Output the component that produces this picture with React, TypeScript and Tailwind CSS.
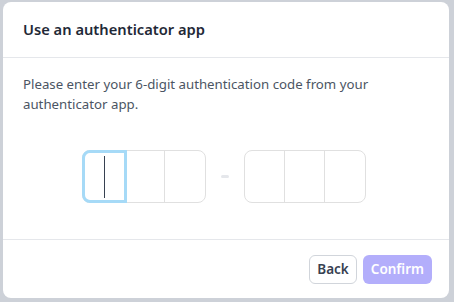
export default function App() {
  const font = { fontFamily: '"Noto Sans", "Open Sans", sans-serif' };
  return (
    <div className="h-[302px] w-[454px] overflow-hidden bg-[#cdd1d8] pl-[3px] pt-[2px]" style={font}>
      <div className="flex h-[296px] w-[446px] flex-col rounded-lg bg-white">
        {/* header */}
        <div className="flex h-[56px] items-center border-b border-[#e5e7eb] px-5">
          <h2 className="text-[14.7px] font-semibold text-[#1f2937]">Use an authenticator app</h2>
        </div>

        {/* body */}
        <div className="flex h-[182px] flex-col border-b border-[#e5e7eb] px-5 pt-[16px]">
          <p className="text-[13.25px] leading-[20px] text-[#4b5563]">
            Please enter your 6-digit authentication code from your authenticator app.
          </p>
          <div className="mt-[36px] flex items-center justify-center gap-[15px] pr-[4px]">
            <div className="flex h-[53px] w-[124px] rounded-lg border border-[#e0e0e0]">
              <div className="relative -m-px flex h-[53px] w-[45px] items-center justify-center rounded-l-lg border-[3px] border-[#a6daf7]">
                <div className="h-[42px] w-px bg-[#374151]" />
              </div>
              <div className="w-[39px] border-r border-[#e0e0e0]" />
              <div className="flex-1" />
            </div>
            <div className="h-[3px] w-[8px] rounded-full bg-[#e5e7eb]" />
            <div className="flex h-[53px] w-[122px] rounded-lg border border-[#e0e0e0]">
              <div className="w-[40px] border-r border-[#e0e0e0]" />
              <div className="w-[40px] border-r border-[#e0e0e0]" />
              <div className="flex-1" />
            </div>
          </div>
        </div>

        {/* footer */}
        <div className="flex flex-1 items-center justify-end gap-[6px] pr-[17px]">
          <button className="h-[29px] rounded-md border border-[#d1d5db] px-[7px] text-[13.5px] font-semibold text-[#374151]">
            Back
          </button>
          <button className="h-[29px] rounded-md bg-[#b3aefb] px-[8px] text-[13.5px] font-semibold text-white">
            Confirm
          </button>
        </div>
      </div>
    </div>
  );
}
